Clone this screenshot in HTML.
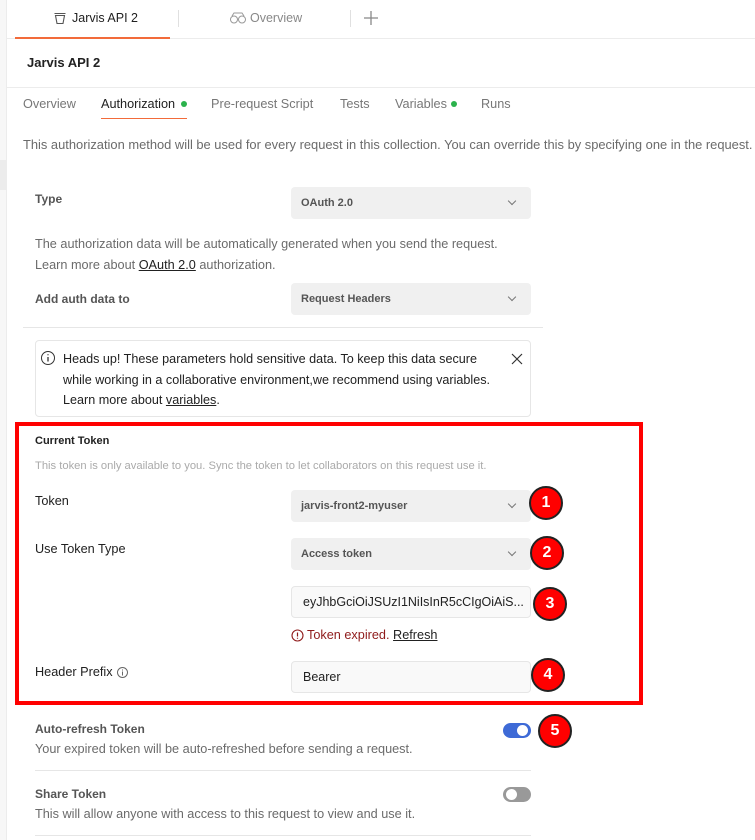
<!DOCTYPE html>
<html><head><meta charset="utf-8"><style>
*{margin:0;padding:0;box-sizing:border-box}
body{width:755px;height:840px;overflow:hidden;background:#fff;font-family:"Liberation Sans",sans-serif;font-size:12px;color:#212121;position:relative}
.a{position:absolute;white-space:nowrap}
.sel{position:absolute;left:291px;width:240px;height:32px;background:#f0f0f0;border-radius:4px;font-size:11px;font-weight:bold;color:#555;padding:0 10px;line-height:32px}
.sel:after{content:"";position:absolute;right:16px;top:11px;width:5px;height:5px;border-right:1px solid #777;border-bottom:1px solid #777;transform:rotate(45deg)}
.inp{position:absolute;left:291px;width:240px;height:32px;background:#f9f9f9;border:1px solid #e6e6e6;border-radius:4px;padding:0 11px;line-height:30px;color:#212121;font-size:12.5px}
.b{position:absolute;width:34px;height:34px;border-radius:50%;background:#f00;border:2px solid #222;color:#fff;font-weight:bold;font-size:16px;text-align:center;line-height:30px}
.lbl{color:#212121}
.g{color:#6b6b6b;font-size:12.7px}
</style></head><body>
<div class="a" style="left:0;top:0;width:7px;height:840px;background:#f7f7f7;border-right:1px solid #ececec"></div>
<div class="a" style="left:0;top:160px;width:7px;height:30px;background:#ececec"></div>
<div class="a" style="left:7px;top:38px;width:748px;height:1px;background:#ececec"></div>
<svg class="a" style="left:53px;top:11px" width="14" height="14" viewBox="0 0 14 14"><path d="M1.5 2.5h11M2.5 4.5l1.5 8h6l1.5-8z" fill="none" stroke="#555" stroke-width="1.1"/></svg>
<div class="a" style="left:72px;top:11px;font-size:12.5px">Jarvis API 2</div>
<div class="a" style="left:15px;top:37px;width:155px;height:2px;background:#f26b3a"></div>
<div class="a" style="left:178px;top:10px;width:1px;height:17px;background:#e0e0e0"></div>
<svg class="a" style="left:229px;top:12px" width="18" height="12" viewBox="0 0 18 12"><circle cx="5" cy="7.5" r="3.5" fill="none" stroke="#999"/><circle cx="13" cy="7.5" r="3.5" fill="none" stroke="#999"/><path d="M3 4l2-3h8l2 3" fill="none" stroke="#999"/></svg>
<div class="a" style="left:250px;top:11px;color:#888;font-size:12.5px">Overview</div>
<div class="a" style="left:350px;top:10px;width:1px;height:17px;background:#e0e0e0"></div>
<svg class="a" style="left:364px;top:11px" width="14" height="14" viewBox="0 0 14 14"><path d="M7 0v14M0 7h14" stroke="#888" stroke-width="1.3"/></svg>
<div class="a" style="left:27px;top:55px;font-size:13px;font-weight:bold">Jarvis API 2</div>
<div class="a" style="left:7px;top:87px;width:748px;height:1px;background:#ececec"></div>
<div class="a" style="left:23px;top:97px;font-size:12.7px;color:#777">Overview</div>
<div class="a" style="left:101px;top:97px;font-size:12.7px">Authorization</div>
<div class="a" style="left:181px;top:101px;width:6px;height:6px;border-radius:50%;background:#2bb24c"></div>
<div class="a" style="left:101px;top:118px;width:86px;height:1px;background:#f26b3a"></div>
<div class="a" style="left:211px;top:97px;font-size:12.7px;color:#777">Pre-request Script</div>
<div class="a" style="left:340px;top:97px;font-size:12.7px;color:#777">Tests</div>
<div class="a" style="left:395px;top:97px;font-size:12.7px;color:#777">Variables</div>
<div class="a" style="left:451px;top:101px;width:6px;height:6px;border-radius:50%;background:#2bb24c"></div>
<div class="a" style="left:481px;top:97px;font-size:12.7px;color:#777">Runs</div>
<div class="a g" style="left:23px;top:137px;font-size:12.9px">This authorization method will be used for every request in this collection. You can override this by specifying one in the request.</div>
<div class="a" style="left:35px;top:192px;font-weight:bold;color:#555">Type</div>
<div class="sel" style="top:187px">OAuth 2.0</div>
<div class="a g" style="left:35px;top:237px">The authorization data will be automatically generated when you send the request.</div>
<div class="a g" style="left:35px;top:258px">Learn more about <span style="color:#212121;text-decoration:underline">OAuth 2.0</span> authorization.</div>
<div class="a" style="left:35px;top:292px;font-weight:bold;color:#555">Add auth data to</div>
<div class="sel" style="top:283px">Request Headers</div>
<div class="a" style="left:23px;top:327px;width:520px;height:1px;background:#e6e6e6"></div>
<div class="a" style="left:35px;top:340px;width:496px;height:77px;border:1px solid #e6e6e6;border-radius:4px"></div>
<svg class="a" style="left:40px;top:350px" width="16" height="16" viewBox="0 0 16 16"><circle cx="8" cy="8" r="6.5" fill="none" stroke="#333"/><path d="M8 7v4.5M8 4.3v1" stroke="#333" stroke-width="1.3"/></svg>
<div class="a" style="left:63px;top:349px;line-height:20.5px;font-size:12.6px">Heads up! These parameters hold sensitive data. To keep this data secure<br>while working in a collaborative environment,we recommend using variables.<br>Learn more about <span style="text-decoration:underline">variables</span>.</div>
<svg class="a" style="left:511px;top:353px" width="12" height="12" viewBox="0 0 12 12"><path d="M1 1l10 10M11 1L1 11" stroke="#333" stroke-width="1.2"/></svg>
<div class="a" style="left:15px;top:422px;width:628px;height:283px;border:4px solid #f00"></div>
<div class="a" style="left:35px;top:435px;font-size:11px;font-weight:bold">Current Token</div>
<div class="a" style="left:35px;top:460px;font-size:11.2px;color:#aaa">This token is only available to you. Sync the token to let collaborators on this request use it.</div>
<div class="a lbl" style="left:35px;top:494px;font-size:12.7px">Token</div>
<div class="sel" style="top:490px">jarvis-front2-myuser</div>
<div class="a lbl" style="left:35px;top:542px;font-size:12.7px">Use Token Type</div>
<div class="sel" style="top:538px">Access token</div>
<div class="inp" style="top:586px">eyJhbGciOiJSUzI1NiIsInR5cCIgOiAiS...</div>
<svg class="a" style="left:291px;top:629px" width="13" height="13" viewBox="0 0 13 13"><circle cx="6.5" cy="6.5" r="5.5" fill="none" stroke="#8f1b1b" stroke-width="1.1"/><path d="M6.5 3.5v4M6.5 8.8v1" stroke="#8f1b1b" stroke-width="1.2"/></svg>
<div class="a" style="left:307px;top:628px;color:#8f1b1b;font-size:12.7px">Token expired. <span style="color:#212121;text-decoration:underline">Refresh</span></div>
<div class="a lbl" style="left:35px;top:665px;font-size:12.7px">Header Prefix</div>
<svg class="a" style="left:116px;top:666px" width="13" height="13" viewBox="0 0 13 13"><circle cx="6.5" cy="6.5" r="5" fill="none" stroke="#666"/><path d="M6.5 5.5v4M6.5 3.5v1" stroke="#666"/></svg>
<div class="inp" style="top:661px">Bearer</div>
<div class="b" style="left:529px;top:486px">1</div>
<div class="b" style="left:530px;top:536px">2</div>
<div class="b" style="left:533px;top:587px">3</div>
<div class="b" style="left:531px;top:658px">4</div>
<div class="a" style="left:35px;top:722px;font-weight:bold;color:#555">Auto-refresh Token</div>
<div class="a g" style="left:35px;top:742px">Your expired token will be auto-refreshed before sending a request.</div>
<div class="a" style="left:503px;top:723px;width:28px;height:15px;border-radius:8px;background:#3e6ad6"></div>
<div class="a" style="left:517px;top:725px;width:11px;height:11px;border-radius:50%;background:#fff"></div>
<div class="b" style="left:538px;top:714px">5</div>
<div class="a" style="left:35px;top:770px;width:496px;height:1px;background:#e6e6e6"></div>
<div class="a" style="left:35px;top:787px;font-weight:bold;color:#555">Share Token</div>
<div class="a g" style="left:35px;top:807px">This will allow anyone with access to this request to view and use it.</div>
<div class="a" style="left:503px;top:787px;width:28px;height:15px;border-radius:8px;background:#999"></div>
<div class="a" style="left:506px;top:789px;width:11px;height:11px;border-radius:50%;background:#fff"></div>
<div class="a" style="left:35px;top:835px;width:496px;height:1px;background:#e6e6e6"></div>
</body></html>
